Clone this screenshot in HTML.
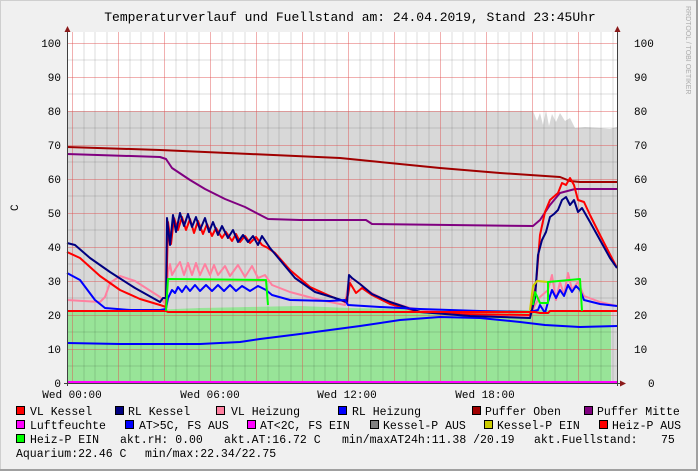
<!DOCTYPE html>
<html><head><meta charset="utf-8"><style>
html,body{margin:0;padding:0;background:#f0f0f0;}
svg{display:block;font-family:"Liberation Mono","DejaVu Sans Mono",monospace;}
</style></head><body>
<svg width="698" height="471" viewBox="0 0 698 471" xmlns="http://www.w3.org/2000/svg">
<rect x="0" y="0" width="698" height="471" fill="#f0f0f0"/>
<rect x="0.5" y="0.5" width="697" height="470" fill="none" stroke="#cfcfcf"/>
<rect x="696" y="0" width="2" height="471" fill="#a0a0a0"/>
<rect x="0" y="469" width="698" height="2" fill="#a0a0a0"/>
<text x="350" y="21" font-size="13" text-anchor="middle" fill="#000">Temperaturverlauf und Fuellstand am: 24.04.2019, Stand 23:45Uhr</text>
<text transform="translate(686,6) rotate(90)" font-size="7" fill="#aaa" font-family="Liberation Sans, sans-serif">RRDTOOL / TOBI OETIKER</text>
<text transform="translate(18,211) rotate(-90)" font-size="11" fill="#000">C</text>
<!-- plot background -->
<rect x="67" y="32" width="550" height="351" fill="#fff"/>
<!-- gray fuellstand area -->
<polygon fill="#d8d8d8" points="67,111 533,111 537,121 540,113 543,125 546,110 549,126 552,114 556,122 560,113 565,121 570,118 575,128 585,127 600,128 610,129 617,127 617,383 67,383"/>
<!-- green area -->
<polygon fill="#98e498" points="67,311 150,310 200,308 300,306 350,308 450,310 530,310 611,310 611,383 67,383"/>
<!-- minor grid -->
<g stroke="#000" stroke-opacity="0.13" stroke-width="1">
<path d="M84,32V383M95,32V383M107,32V383M130,32V383M141,32V383M153,32V383M176,32V383M187,32V383M199,32V383M222,32V383M233,32V383M245,32V383M268,32V383M279,32V383M291,32V383M314,32V383M325,32V383M337,32V383M360,32V383M371,32V383M383,32V383M406,32V383M417,32V383M429,32V383M452,32V383M463,32V383M475,32V383M498,32V383M509,32V383M521,32V383M544,32V383M555,32V383M567,32V383M590,32V383M601,32V383M613,32V383"/>
<path d="M67,366H617M67,332H617M67,298H617M67,264H617M67,230H617M67,196H617M67,162H617M67,128H617M67,94H617M67,60H617"/>
</g>
<g stroke="#e05050" stroke-opacity="0.45" stroke-width="1">
<path d="M72.5,32V383M118.5,32V383M164.5,32V383M210.5,32V383M256.5,32V383M302.5,32V383M348.5,32V383M394.5,32V383M440.5,32V383M486.5,32V383M532.5,32V383M578.5,32V383"/>
<path d="M67,349.5H617M67,315.5H617M67,281.5H617M67,247.5H617M67,213.5H617M67,179.5H617M67,145.5H617M67,111.5H617M67,77.5H617M67,43.5H617"/>
</g>
<!-- data lines -->
<g fill="none" stroke-width="2" stroke-linejoin="round">
<polyline stroke="#0000ff" points="67,343 120,344 200,344 240,342 260,339 300,334 330,330 360,326 400,320 440,317 480,318 520,322 545,325 580,327 617,326"/>
<polyline stroke="#a00000" points="67,147 160,150 250,154 340,158 380,162 440,168 500,173 560,177 570,181 580,182 617,182"/>
<polyline stroke="#800080" points="67,154 160,157 166,159 172,168 178,172 190,180 205,189 225,199 245,207 268,219 300,220 340,220 366,220 372,224 450,225 533,226 540,220 550,205 560,193 575,189 617,189"/>
<polyline stroke="#ff80a0" points="67,300 100,302 105,297 110,283 120,276 135,281 160,297 166,305 168,272 170,264 172,275 176,268 180,262 184,275 188,263 192,275 196,263 200,275 205,264 210,275 214,265 218,275 225,266 230,276 238,265 245,277 252,266 258,278 265,275 272,285 290,292 320,300 345,305 348,285 352,278 360,284 370,292 385,300 410,308 440,312 480,315 530,316 535,305 540,297 548,290 552,275 556,300 560,282 564,295 568,273 572,290 578,282 584,296 600,302 617,306"/>
<polyline stroke="#ff0000" points="67,252 80,258 100,276 120,290 140,299 160,305 166,307 168,222 171,244 174,218 178,230 182,217 186,230 190,219 194,233 198,221 203,234 207,224 212,236 216,228 222,238 226,232 232,241 236,234 240,242 245,236 250,243 256,237 262,245 268,248 275,253 290,270 310,287 330,296 345,302 348,295 350,283 356,293 362,288 372,295 390,304 420,312 460,314 530,315 536,285 540,235 545,212 550,200 558,193 562,183 566,185 570,178 574,185 578,200 584,202 590,215 600,235 617,268"/>
<polyline stroke="#000080" points="67,243 75,245 90,258 110,272 135,288 160,302 163,298 166,298 167,218 170,245 173,215 176,232 180,213 184,226 188,214 192,227 196,217 200,230 205,218 209,232 213,222 218,235 222,226 228,238 233,230 238,242 243,235 248,242 253,236 258,245 262,236 266,242 270,248 280,260 295,278 315,292 335,298 347,302 349,275 352,278 360,284 372,294 390,302 420,312 470,316 530,318 535,298 538,255 542,240 546,232 550,217 554,214 558,210 562,200 566,197 570,205 574,200 578,212 582,208 590,222 600,240 610,258 617,268"/>
<polyline stroke="#0000ff" points="67,273 80,280 95,300 105,308 130,310 160,310 166,309 168,298 172,290 175,293 178,287 182,292 186,286 190,291 195,285 200,291 206,285 212,291 218,285 224,291 230,285 236,291 242,286 250,291 258,286 266,290 272,295 290,300 330,301 345,300 348,305 380,307 420,309 480,311 530,312 538,310 540,305 545,313 548,302 552,290 556,298 560,290 564,296 568,285 572,292 576,286 580,290 584,300 600,304 617,306"/>
<polyline stroke="#ff0000" points="67,311 166,311 168,312 268,312 268,312 532,312 535,312 540,313 548,313 550,311 580,311 582,311 617,311"/>
<polyline stroke="#00ff00" points="166,311 168,279 266,280 268,305"/>
<polyline stroke="#cccc00" points="530,310 533,286 537,281 548,282"/>
<polyline stroke="#00ff00" points="533,305 535,292 540,303 548,303 548,282 580,279 582,311"/>
<line x1="67" y1="382" x2="617" y2="382" stroke="#ff00ff"/>
</g>
<!-- axes -->
<g stroke="#404040" stroke-width="1">
<line x1="67.5" y1="30" x2="67.5" y2="386"/>
<line x1="617.5" y1="30" x2="617.5" y2="386"/>
<line x1="64" y1="383.5" x2="621" y2="383.5"/>
</g>
<g fill="#8b1a1a">
<polygon points="64.5,32 67.5,26 70.5,32"/>
<polygon points="614.5,32 617.5,26 620.5,32"/>
<polygon points="620,380.5 626,383.5 620,386.5"/>
</g>
<g font-size="11" fill="#000">
<g text-anchor="end">
<text x="61" y="47">100</text><text x="61" y="81">90</text><text x="61" y="115">80</text><text x="61" y="149">70</text><text x="61" y="183">60</text><text x="61" y="217">50</text><text x="61" y="251">40</text><text x="61" y="285">30</text><text x="61" y="319">20</text><text x="61" y="353">10</text><text x="61" y="387">0</text>
</g>
<text x="634" y="47">100</text><text x="634" y="81">90</text><text x="634" y="115">80</text><text x="634" y="149">70</text><text x="634" y="183">60</text><text x="634" y="217">50</text><text x="634" y="251">40</text><text x="634" y="285">30</text><text x="634" y="319">20</text><text x="634" y="353">10</text><text x="648" y="387">0</text>
<text x="72" y="398" text-anchor="middle">Wed 00:00</text>
<text x="210" y="398" text-anchor="middle">Wed 06:00</text>
<text x="347" y="398" text-anchor="middle">Wed 12:00</text>
<text x="485" y="398" text-anchor="middle">Wed 18:00</text>
</g>
<!-- legend -->
<g stroke="#000" stroke-width="1">
<rect x="16.5" y="406.5" width="8" height="8" fill="#ff0000"/>
<rect x="115.5" y="406.5" width="8" height="8" fill="#000080"/>
<rect x="216.5" y="406.5" width="8" height="8" fill="#ff80a0"/>
<rect x="338.5" y="406.5" width="8" height="8" fill="#0000ff"/>
<rect x="472.5" y="406.5" width="8" height="8" fill="#a00000"/>
<rect x="584.5" y="406.5" width="8" height="8" fill="#800080"/>
<rect x="16.5" y="420.5" width="8" height="8" fill="#ff00ff"/>
<rect x="125.5" y="420.5" width="8" height="8" fill="#0000ff"/>
<rect x="247.5" y="420.5" width="8" height="8" fill="#ff00ff"/>
<rect x="370.5" y="420.5" width="8" height="8" fill="#808080"/>
<rect x="484.5" y="420.5" width="8" height="8" fill="#cccc00"/>
<rect x="599.5" y="420.5" width="8" height="8" fill="#ff0000"/>
<rect x="16.5" y="434.5" width="8" height="8" fill="#00ff00"/>
</g>
<g font-size="11.5" fill="#000" xml:space="preserve">
<text x="30" y="415">VL Kessel</text>
<text x="128" y="415">RL Kessel</text>
<text x="231" y="415">VL Heizung</text>
<text x="352" y="415">RL Heizung</text>
<text x="485" y="415">Puffer Oben</text>
<text x="597" y="415">Puffer Mitte</text>
<text x="30" y="429">Luftfeuchte</text>
<text x="139" y="429">AT&gt;5C, FS AUS</text>
<text x="260" y="429">AT&lt;2C, FS EIN</text>
<text x="383" y="429">Kessel-P AUS</text>
<text x="497" y="429">Kessel-P EIN</text>
<text x="612" y="429">Heiz-P AUS</text>
<text x="30" y="443">Heiz-P EIN</text>
<text x="120" y="443">akt.rH: 0.00</text>
<text x="224" y="443">akt.AT:16.72 C</text>
<text x="342" y="443">min/maxAT24h:11.38 /20.19</text>
<text x="534" y="443">akt.Fuellstand:</text>
<text x="661" y="443">75</text>
<text x="16" y="457">Aquarium:22.46 C</text>
<text x="145" y="457">min/max:22.34/22.75</text>
</g>
</svg>
</body></html>
